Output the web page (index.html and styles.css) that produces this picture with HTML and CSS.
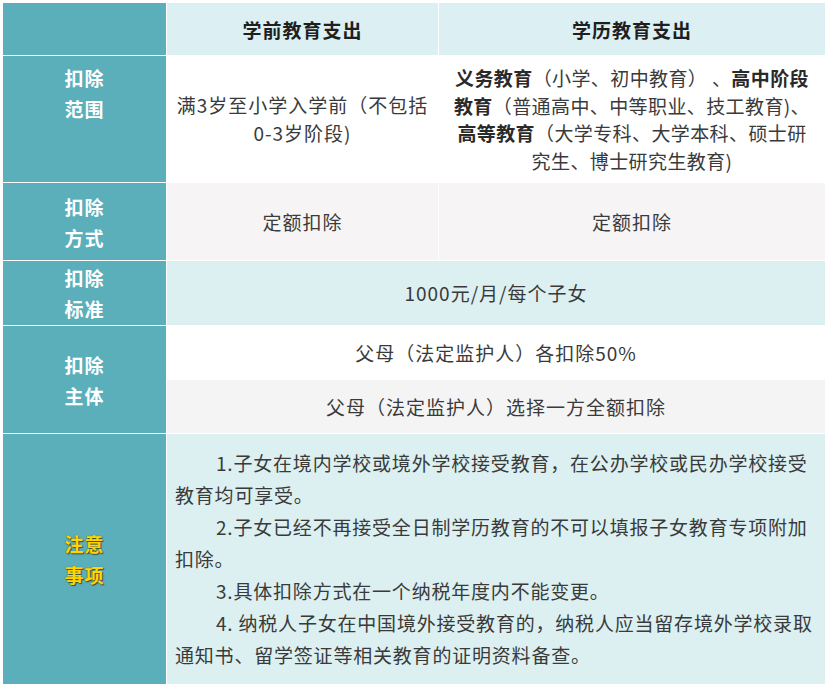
FILE: index.html
```html
<!DOCTYPE html>
<html lang="zh-CN">
<head>
<meta charset="utf-8">
<title>子女教育专项附加扣除</title>
<link rel="stylesheet" href="styles.css">
</head>
<body>
<table class="tbl">
  <colgroup>
    <col class="c1">
    <col class="c2">
    <col class="c3">
  </colgroup>
  <tr class="r-head">
    <td class="label"></td>
    <th class="head">学前教育支出</th>
    <th class="head">学历教育支出</th>
  </tr>
  <tr class="r-scope">
    <td class="label label-top">扣除<br>范围</td>
    <td class="cell bg-white">满3岁至小学入学前（不包括<br>0-3岁阶段)</td>
    <td class="cell bg-white scope"><b>义务教育</b>（小学、初中教育） 、<b>高中阶段</b><br><b>教育</b>（普通高中、中等职业、技工教育)、<br><b>高等教育</b>（大学专科、大学本科、硕士研<br>究生、博士研究生教育)</td>
  </tr>
  <tr class="r-way">
    <td class="label">扣除<br>方式</td>
    <td class="cell bg-gray">定额扣除</td>
    <td class="cell bg-gray">定额扣除</td>
  </tr>
  <tr class="r-std">
    <td class="label">扣除<br>标准</td>
    <td class="cell bg-teal" colspan="2">1000元/月/每个子女</td>
  </tr>
  <tr class="r-sub">
    <td class="label" rowspan="2">扣除<br>主体</td>
    <td class="cell bg-white" colspan="2">父母（法定监护人）各扣除50%</td>
  </tr>
  <tr class="r-sub">
    <td class="cell bg-light" colspan="2">父母（法定监护人）选择一方全额扣除</td>
  </tr>
  <tr class="r-note">
    <td class="label"><span class="warn">注意<br>事项</span></td>
    <td class="cell bg-teal notes" colspan="2">
      <p>1.子女在境内学校或境外学校接受教育，在公办学校或民办学校接受教育均可享受。</p>
      <p>2.子女已经不再接受全日制学历教育的不可以填报子女教育专项附加扣除。</p>
      <p>3.具体扣除方式在一个纳税年度内不能变更。</p>
      <p>4. 纳税人子女在中国境外接受教育的，纳税人应当留存境外学校录取通知书、留学签证等相关教育的证明资料备查。</p>
    </td>
  </tr>
</table>
</body>
</html>
```

FILE: styles.css
```css
html, body {
  margin: 0;
  padding: 0;
  background: #ffffff;
}

body {
  font-family: "Noto Sans CJK SC", "Noto Sans", sans-serif;
  color: #3a3a3a;
}

.tbl {
  margin: 2px;
  width: 824px;
  table-layout: fixed;
  border-collapse: separate;
  border-spacing: 1px;
  font-size: 19px;
}

.c1 { width: 163px; }
.c2 { width: 271px; }
.c3 { width: 386px; }

.tbl td,
.tbl th {
  padding: 0 8px;
  text-align: center;
  vertical-align: middle;
}

.r-head td, .r-head th { height: 52px; }
.r-scope td { height: 126px; }
.r-scope td.label-top { height: 120px; }
.r-way td { height: 77px; }
.r-std td { height: 64px; }
.r-sub td { height: 53px; }
.r-note td { height: 250px; }

.label {
  background: #5aafba;
  color: #ffffff;
  font-weight: bold;
  line-height: 31px;
  letter-spacing: 1px;
}

.label-top {
  vertical-align: top !important;
  padding-top: 6px !important;
}

.warn {
  color: #ffd400;
  text-shadow: 1px 1px 1px #3d4a3a, 0 0 1px #6a5a10;
}

.head {
  background: #dcf0f3;
  color: #1f1f1f;
  font-weight: bold;
  letter-spacing: 1px;
}

.cell {
  line-height: 28px;
  letter-spacing: 1px;
}

.scope {
  letter-spacing: 0.4px;
  line-height: 27.5px;
}

.scope b {
  color: #2a2a2a;
}

.bg-white { background: #ffffff; }
.bg-gray { background: #f6f4f5; }
.bg-light { background: #f4f4f4; }
.bg-teal { background: #dcf0f1; }

.notes {
  text-align: left !important;
  padding: 0 6px 0 8px !important;
  letter-spacing: 0.8px;
  line-height: 32px;
}

.notes p {
  margin: 0;
  text-indent: 41px;
}
```
